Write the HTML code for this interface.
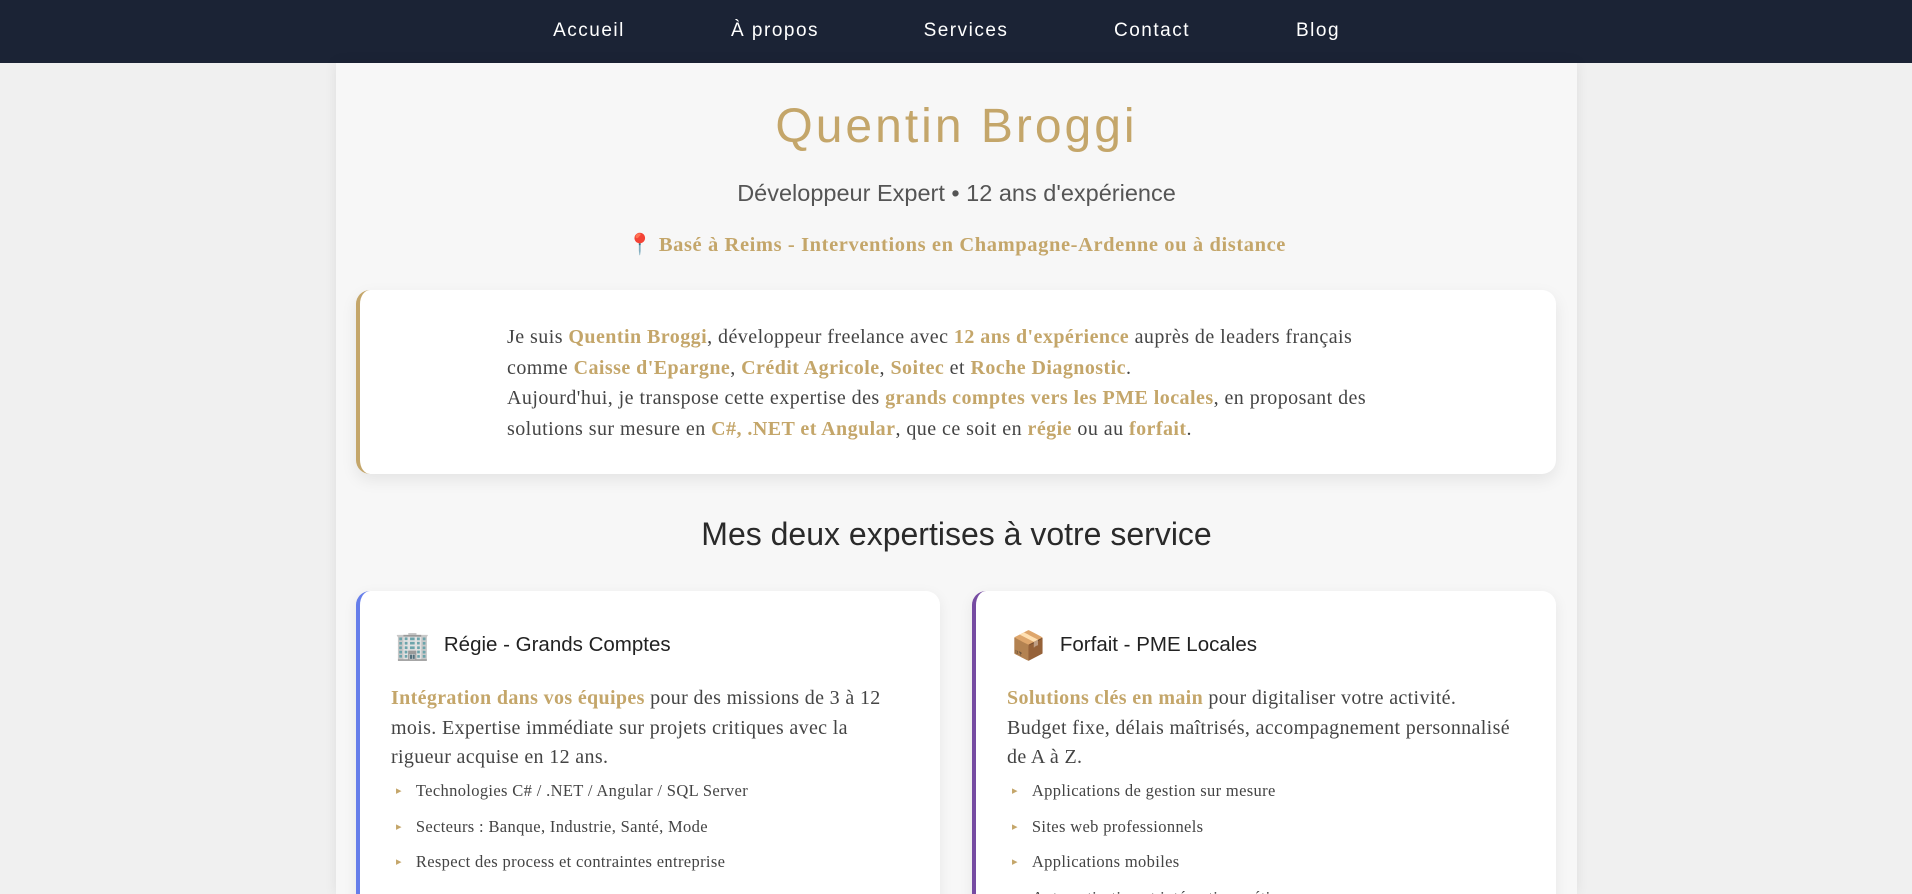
<!DOCTYPE html>
<html><head><meta charset="utf-8">
<style>
*{box-sizing:border-box;margin:0;padding:0}
html,body{width:1912px;height:894px;overflow:hidden;background:#f0f0f0;font-family:"Liberation Sans",sans-serif}
nav{position:absolute;left:0;top:0;width:1912px;height:63px;background:#1b2335}
nav a{position:absolute;top:20px;color:#fff;font-size:19px;letter-spacing:1.5px;text-decoration:none;transform:translateX(-50%);white-space:nowrap}
.wrap{position:absolute;left:336px;top:63px;width:1241px;height:831px;overflow:hidden;background:#f7f7f7;box-shadow:0 0 12px rgba(0,0,0,.08)}
h1{position:absolute;left:0;width:100%;top:36px;text-align:center;font-weight:normal;font-size:48px;letter-spacing:3px;color:#c4a66a}
.sub{position:absolute;left:0;width:100%;top:117px;text-align:center;font-size:23.5px;color:#555}
.loc{position:absolute;left:0;width:100%;top:170px;text-align:center;font-family:"Liberation Serif",serif;font-weight:bold;font-size:20.5px;letter-spacing:.6px;color:#c4a66a}
.intro{position:absolute;left:20px;top:227px;width:1200px;height:184px;background:#fff;border-radius:14px;border-left:4px solid #c4a66a;box-shadow:0 6px 16px rgba(0,0,0,.08);font-family:"Liberation Serif",serif;font-size:20px;letter-spacing:.45px;line-height:30.5px;color:#444;padding:32px 0 0 147px;white-space:nowrap}
b{color:#c4a66a}
h2{position:absolute;left:0;width:100%;top:453px;text-align:center;font-weight:normal;font-size:32px;color:#2a2a2a}
.card{position:absolute;top:528px;width:584px;height:340px;background:#fff;border-radius:14px;box-shadow:0 4px 14px rgba(0,0,0,.07);font-family:"Liberation Serif",serif;color:#444}
.c1{left:20px;border-left:4px solid #667eea}
.c2{left:636px;border-left:4px solid #764ba2}
.ct{position:absolute;left:35px;top:38px;font-family:"Liberation Sans",sans-serif;font-size:20.5px;color:#222;white-space:nowrap}
.ct span{font-size:28px;vertical-align:-4px;margin-right:14px}
.cp{position:absolute;left:31px;top:93px;width:560px;font-size:20px;letter-spacing:.35px;line-height:29.5px;white-space:nowrap}
ul{position:absolute;left:36px;top:190px;list-style:none;font-size:16.5px;letter-spacing:.35px}
li{height:35.5px;white-space:nowrap}
li:before{content:"▸";color:#c4a66a;font-size:11px;margin-right:14px;vertical-align:2px}
</style></head><body>
<nav>
<a style="left:589px">Accueil</a>
<a style="left:775px">À propos</a>
<a style="left:966px">Services</a>
<a style="left:1152px">Contact</a>
<a style="left:1318px">Blog</a>
</nav>
<div class="wrap">
<h1>Quentin Broggi</h1>
<div class="sub">Développeur Expert • 12 ans d'expérience</div>
<div class="loc">📍 Basé à Reims - Interventions en Champagne-Ardenne ou à distance</div>
<div class="intro">Je suis <b>Quentin Broggi</b>, développeur freelance avec <b>12 ans d'expérience</b> auprès de leaders français<br>comme <b>Caisse d'Epargne</b>, <b>Crédit Agricole</b>, <b>Soitec</b> et <b>Roche Diagnostic</b>.<br>Aujourd'hui, je transpose cette expertise des <b>grands comptes vers les PME locales</b>, en proposant des<br>solutions sur mesure en <b>C#, .NET et Angular</b>, que ce soit en <b>régie</b> ou au <b>forfait</b>.</div>
<h2>Mes deux expertises à votre service</h2>
<div class="card c1">
<div class="ct"><span>🏢</span>Régie - Grands Comptes</div>
<div class="cp"><b>Intégration dans vos équipes</b> pour des missions de 3 à 12<br>mois. Expertise immédiate sur projets critiques avec la<br>rigueur acquise en 12 ans.</div>
<ul><li>Technologies C# / .NET / Angular / SQL Server</li><li>Secteurs : Banque, Industrie, Santé, Mode</li><li>Respect des process et contraintes entreprise</li></ul>
</div>
<div class="card c2">
<div class="ct"><span>📦</span>Forfait - PME Locales</div>
<div class="cp"><b>Solutions clés en main</b> pour digitaliser votre activité.<br>Budget fixe, délais maîtrisés, accompagnement personnalisé<br>de A à Z.</div>
<ul><li>Applications de gestion sur mesure</li><li>Sites web professionnels</li><li>Applications mobiles</li><li>Automatisation et intégration métier</li></ul>
</div>
</div>
</body></html>
